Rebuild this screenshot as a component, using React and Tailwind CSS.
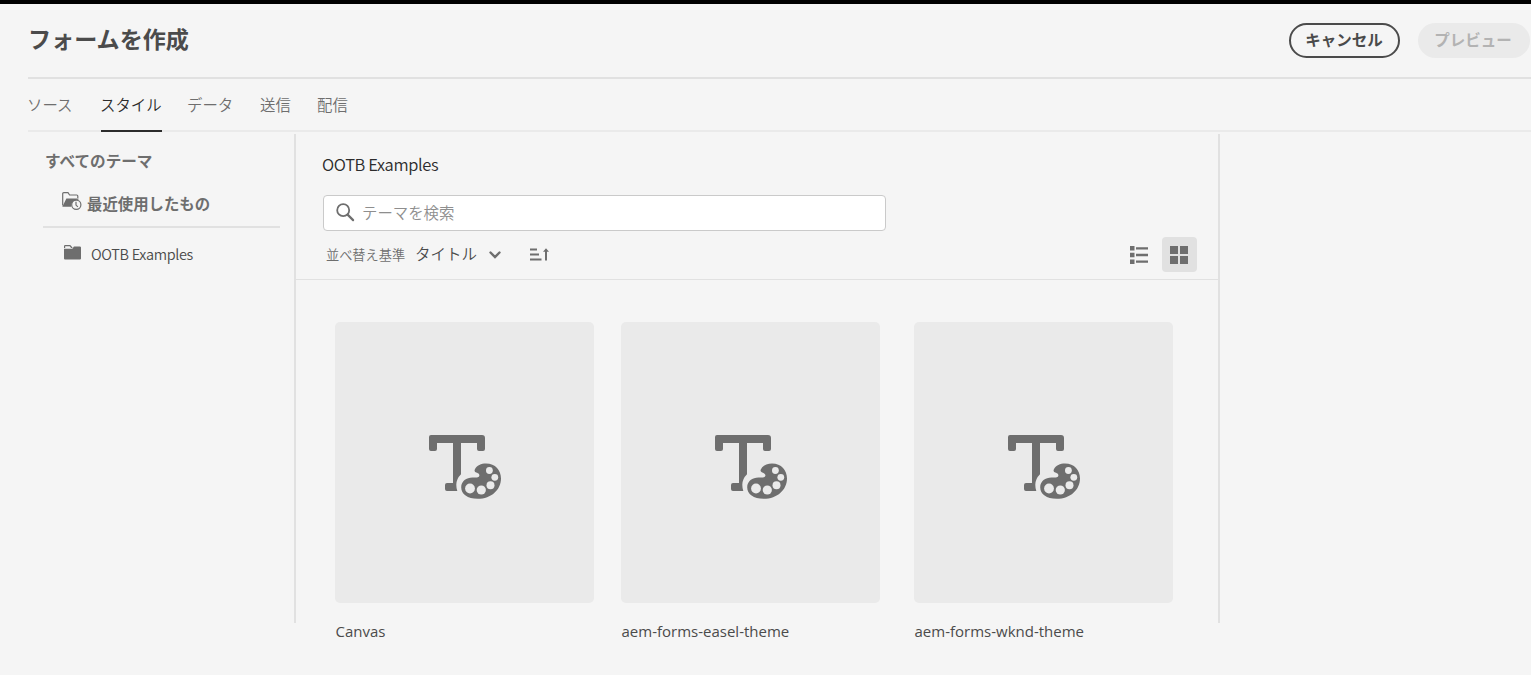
const tabs = [
  { label: 'ソース', width: 'w-[47px]' },
  { label: 'スタイル', width: 'w-[61px]', active: true },
  { label: 'データ', width: 'w-[47px]' },
  { label: '送信', width: 'w-[31px]' },
  { label: '配信', width: 'w-[31px]' },
];

const themes = [
  { name: 'Canvas', spacing: 'mr-[27px]' },
  { name: 'aem-forms-easel-theme', spacing: 'mr-[34px]' },
  { name: 'aem-forms-wknd-theme', spacing: '' },
];

function RecentFolderIcon() {
  return (
    <svg width="20" height="20" viewBox="0 0 20 20" fill="none" className="shrink-0">
      <path d="M.7 13.500V1.800Q.7.700 1.800.700H6l1.600 2.300h7.100q1.100 0 1.100 1.100v2" stroke="#6e6e6e" strokeWidth="1.2" />
      <path d="M.3 14.700 4.400 6.600h12.200l-.4 1.300a6 6 0 0 0-6.900 6.800z" fill="#6e6e6e" />
      <circle cx="14.300" cy="12.800" r="4.600" stroke="#6e6e6e" strokeWidth="1.2" />
      <path d="M14 9.700v3.400l1.900 1.800" stroke="#6e6e6e" strokeWidth="1.2" />
    </svg>
  );
}

function FolderIcon() {
  return (
    <svg width="17" height="15" viewBox="0 0 17 15" className="shrink-0">
      <path d="M0 4V1.200Q0 0 1.200 0h4.700q.5 0 .9.500L9 3.200H0z" fill="#6e6e6e" />
      <path d="M1.200 1.300h4.500l1.400 1.800H1.200z" fill="#f5f5f5" />
      <path d="M0 4h8.200l1.700-2.600h5.900q1.200 0 1.200 1.200v10.900q0 1-1 1H1q-1 0-1-1z" fill="#6e6e6e" />
    </svg>
  );
}

function ThemeIcon() {
  return (
    <svg width="74" height="66" viewBox="0 0 74 66" className="shrink-0">
      <path
        d="M3 1h51q3 0 3 3v11q0 2-2 2h-4q-2 0-2-2V9H33v31.200q-4.600 4.500-4.700 10.500 0 3.500 1 6.300H19q-2 0-2-2v-4q0-2 2-2h6V9H9v6q0 2-2 2H3q-2 0-2-2V3Q1 1 3 1z"
        fill="#6e6e6e"
      />
      <path
        d="M46.8 35.5C48.7 31.4 53.3 29.6 58 29.6 67.5 29.6 73 36.5 73 44.4 73 55.5 63.5 64.7 49.7 64.7 39.5 64.7 33.2 60 33.2 53.2 33.2 47 38.4 43.4 44.5 43.4 48 43.4 50 43.8 51 42.5 52.2 40.5 50.7 39.2 48.2 38.4 46.7 37.9 46.2 36.9 46.8 35.5z"
        fill="#6e6e6e"
      />
      <g fill="#eaeaea">
        <circle cx="42" cy="54.5" r="4.9" />
        <circle cx="53.3" cy="56" r="4.6" />
        <circle cx="62.5" cy="51.2" r="4" />
        <circle cx="66.8" cy="43.3" r="3.4" />
        <circle cx="61.4" cy="36.5" r="3.4" />
      </g>
    </svg>
  );
}

function Header() {
  return (
    <header className="ml-7 flex h-[75px] shrink-0 justify-between border-b-2 border-[#e1e1e1]">
      <h1 className="mt-[18px] text-[23.1px] leading-8 font-bold text-[#4b4b4b]">フォームを作成</h1>
      <div className="mt-[19px] mr-px flex gap-[18px] text-[15.5px] font-bold">
        <button className="flex h-[35px] w-[111px] justify-center rounded-full border-2 border-[#4b4b4b] pr-px leading-[28px] text-[#4b4b4b]">
          キャンセル
        </button>
        <button className="flex h-[35px] w-28 justify-center rounded-full bg-[#eaeaea] pr-[2px] leading-[32px] text-[#b3b3b3]">
          プレビュー
        </button>
      </div>
    </header>
  );
}

function Tabs() {
  return (
    <nav className="ml-7 flex h-[53px] shrink-0 gap-[26px] text-[15.4px] font-[350] shadow-[inset_0_-2px_#eaeaea]">
      {tabs.map((tab) => (
        <a
          key={tab.label}
          className={`${tab.width} block h-[53px] leading-[50px] whitespace-nowrap ${
            tab.active ? 'border-b-2 border-[#2c2c2c] text-[#2c2c2c]' : 'text-[#6e6e6e]'
          }`}
        >
          <span className="-ml-px">{tab.label}</span>
        </a>
      ))}
    </nav>
  );
}

function Sidebar() {
  return (
    <aside className="flex h-[489px] w-[296px] shrink-0 flex-col border-r-2 border-[#e1e1e1]">
      <h2 className="mt-[14px] ml-[45px] text-[15.6px] leading-6 font-bold text-[#6e6e6e]">すべてのテーマ</h2>
      <div className="mr-[14px] ml-[43px] flex h-14 border-b-2 border-[#e1e1e1] pt-5 pl-[19px]">
        <RecentFolderIcon />
        <span className="-mt-px ml-[5px] text-[15.4px] leading-6 font-bold text-[#6e6e6e]">最近使用したもの</span>
      </div>
      <div className="mt-[14px] ml-16 flex">
        <span className="mt-[3px]">
          <FolderIcon />
        </span>
        <span className="ml-[10px] text-[14.5px] leading-6 font-[350] tracking-[-0.33px] text-[#4b4b4b]">
          OOTB Examples
        </span>
      </div>
    </aside>
  );
}

function Toolbar() {
  return (
    <div className="flex h-[146px] flex-col border-b border-[#e1e1e1]">
      <h2 className="mt-[18px] ml-[26px] text-[16.5px] leading-6 font-[350] tracking-[-0.36px] text-[#2c2c2c]">OOTB Examples</h2>
      <div className="mt-[19px] ml-[27px] flex h-9 w-[563px] shrink-0 items-center rounded-[4px] border border-[#cacaca] bg-white pl-3">
        <svg width="19" height="19" viewBox="0 0 19 19" fill="none" stroke="#6e6e6e" className="-mt-px">
          <circle cx="7.200" cy="7.200" r="6" strokeWidth="1.800" />
          <path d="m11.600 11.600 5.500 5.500" strokeWidth="2.200" strokeLinecap="round" />
        </svg>
        <span className="-mt-[3px] ml-[7px] text-[15.4px] leading-6 font-[350] text-[#8e8e8e]">テーマを検索</span>
      </div>
      <div className="mt-[6px] mr-[21px] ml-[30px] flex h-[35px] items-center">
        <span className="w-[89px] text-[13.2px] font-[350] text-[#6e6e6e]">並べ替え基準</span>
        <span className="-mt-px w-[74px] text-[15.5px] font-[350] text-[#4b4b4b]">タイトル</span>
        <svg width="12" height="8" viewBox="0 0 12 8" fill="none" stroke="#6e6e6e" strokeWidth="2.4" strokeLinecap="round">
          <path d="m1.500 1.500 4.500 4.500 4.500-4.500" />
        </svg>
        <svg width="20" height="13" viewBox="0 0 20 13" fill="#6e6e6e" className="ml-[29px]">
          <path d="M0 .5h7v2H0zM0 5.500h9v2H0zM0 10.500h11.500v2H0z" />
          <path d="M16 .2 19 3.800h-2v8.700h-2V3.800h-2z" />
        </svg>
        <div className="ml-auto flex items-center gap-[14px]">
          <svg width="18" height="18" viewBox="0 0 18 18" fill="#6e6e6e">
            <path d="M0 0h4.500v4.500H0zM0 6.800h4.500v4.500H0zM0 13.500h4.500V18H0zM6 1.200h12v2.400H6zM6 7.800h12v2.400H6zM6 14.400h12v2.400H6z" />
          </svg>
          <span className="flex size-[35px] items-center rounded-[4px] bg-[#e1e1e1] pl-2">
            <svg width="18" height="18" viewBox="0 0 18 18" fill="#6e6e6e">
              <path d="M0 0h8v8H0zM10 0h8v8h-8zM0 10h8v8H0zM10 10h8v8h-8z" />
            </svg>
          </span>
        </div>
      </div>
    </div>
  );
}

function ThemeCard({ theme }) {
  return (
    <div className={`${theme.spacing} w-[259px] shrink-0`}>
      <div className="flex h-[281px] items-start justify-center rounded-[5px] bg-[#eaeaea] pt-[112px]">
        <ThemeIcon />
      </div>
      <p className="mt-4 pl-[0.5px] font-['Open_Sans',sans-serif] text-[15px] leading-6 whitespace-nowrap text-[#4b4b4b]">{theme.name}</p>
    </div>
  );
}

export default function App() {
  return (
    <div className="flex h-[675px] w-[1531px] flex-col overflow-hidden border-t-4 border-black bg-[#f5f5f5] font-['Noto_Sans_CJK_JP','Noto_Sans',sans-serif]">
      <Header />
      <Tabs />
      <div className="mt-[2px] flex min-h-0 flex-1">
        <Sidebar />
        <main className="flex w-[922px] shrink-0 flex-col">
          <Toolbar />
          <div className="mt-[42px] ml-[39px] flex">
            {themes.map((theme) => (
              <ThemeCard key={theme.name} theme={theme} />
            ))}
          </div>
        </main>
        <aside className="h-[489px] flex-1 border-l-2 border-[#e1e1e1]" />
      </div>
    </div>
  );
}
